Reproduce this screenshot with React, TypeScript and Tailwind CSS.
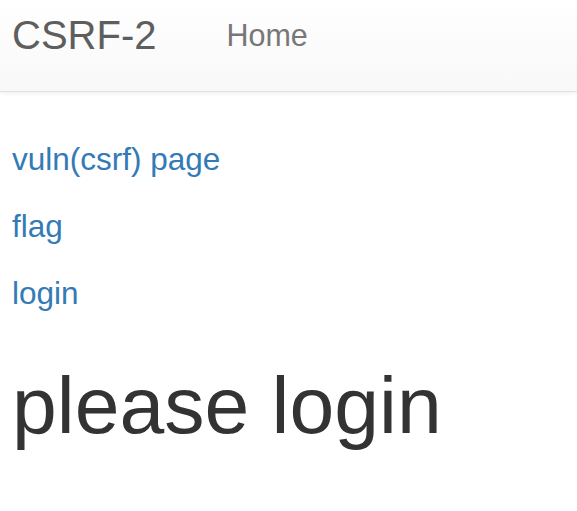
export default function App() {
  return (
    <div className="min-h-[511px] bg-white font-['Liberation_Sans',Arial,sans-serif]">
      {/* Navbar */}
      <nav className="h-[92px] border-b border-[#e2e2e2] bg-gradient-to-b from-white to-[#f8f8f8] shadow-[0_1px_5px_rgba(0,0,0,0.075)]">
        <div className="flex items-start px-3">
          <a className="pt-[15px] text-[40px] leading-[40px] text-[#5e5e5e]">CSRF-2</a>
          <a className="ml-[70px] pt-[20px] text-[30.5px] leading-[30px] text-[#777]">Home</a>
        </div>
      </nav>

      {/* Content */}
      <div className="px-3 pt-[34px]">
        <div className="flex flex-col items-start text-[31.5px] leading-[67px] text-[#337ab7]">
          <a>vuln(csrf) page</a>
          <a>flag</a>
          <a>login</a>
        </div>
        <h1 className="mt-[34px] text-[80.5px] leading-[88px] text-[#333]">please login</h1>
      </div>
    </div>
  );
}
